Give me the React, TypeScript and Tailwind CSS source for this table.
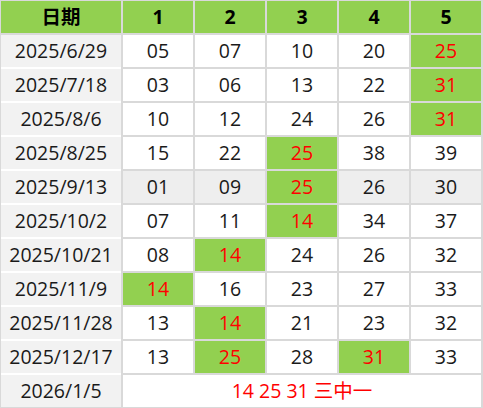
type Row = { date: string; nums: string[]; hits: number[]; shaded?: boolean };

const rows: Row[] = [
  { date: '2025/6/29', nums: ['05', '07', '10', '20', '25'], hits: [4] },
  { date: '2025/7/18', nums: ['03', '06', '13', '22', '31'], hits: [4] },
  { date: '2025/8/6', nums: ['10', '12', '24', '26', '31'], hits: [4] },
  { date: '2025/8/25', nums: ['15', '22', '25', '38', '39'], hits: [2] },
  { date: '2025/9/13', nums: ['01', '09', '25', '26', '30'], hits: [2], shaded: true },
  { date: '2025/10/2', nums: ['07', '11', '14', '34', '37'], hits: [2] },
  { date: '2025/10/21', nums: ['08', '14', '24', '26', '32'], hits: [1] },
  { date: '2025/11/9', nums: ['14', '16', '23', '27', '33'], hits: [0] },
  { date: '2025/11/28', nums: ['13', '14', '21', '23', '32'], hits: [1] },
  { date: '2025/12/17', nums: ['13', '25', '28', '31', '33'], hits: [1, 3] },
];

export default function App() {
  return (
    <div
      className="w-[483px] h-[408px] bg-[#d9d9d9] pl-[1px] pt-[1px] pr-[2px] pb-[1px] text-[19.5px] text-[#1a1a1a]"
      style={{ fontFamily: '"Open Sans", "Noto Sans", "Noto Sans CJK SC", sans-serif' }}
    >
      <div className="grid grid-cols-[120px_repeat(5,70px)] auto-rows-[32px] gap-[2px]">
        {/* header */}
        <div className="bg-[#92d050] flex items-center justify-center font-bold text-black">日期</div>
        {['1', '2', '3', '4', '5'].map((h) => (
          <div key={h} className="bg-[#92d050] flex items-center justify-center font-bold text-black">
            {h}
          </div>
        ))}

        {/* rows */}
        {rows.map((r) => (
          <>
            <div
              key={r.date}
              className="bg-[#f2f2f2] flex items-center justify-center shadow-[0_2px_0_#fff]"
            >
              {r.date}
            </div>
            {r.nums.map((n, i) => {
              const hit = r.hits.includes(i);
              return (
                <div
                  key={r.date + i}
                  className={
                    hit
                      ? 'bg-[#92d050] text-[#ff0000] flex items-center justify-center'
                      : r.shaded
                        ? 'bg-[#eeeeee] flex items-center justify-center'
                        : 'bg-white flex items-center justify-center'
                  }
                >
                  {n}
                </div>
              );
            })}
          </>
        ))}

        {/* last row */}
        <div className="bg-[#f2f2f2] flex items-center justify-center">2026/1/5</div>
        <div className="col-span-5 bg-white flex items-center justify-center text-[#ff0000]">
          14 25 31 三中一
        </div>
      </div>
    </div>
  );
}
